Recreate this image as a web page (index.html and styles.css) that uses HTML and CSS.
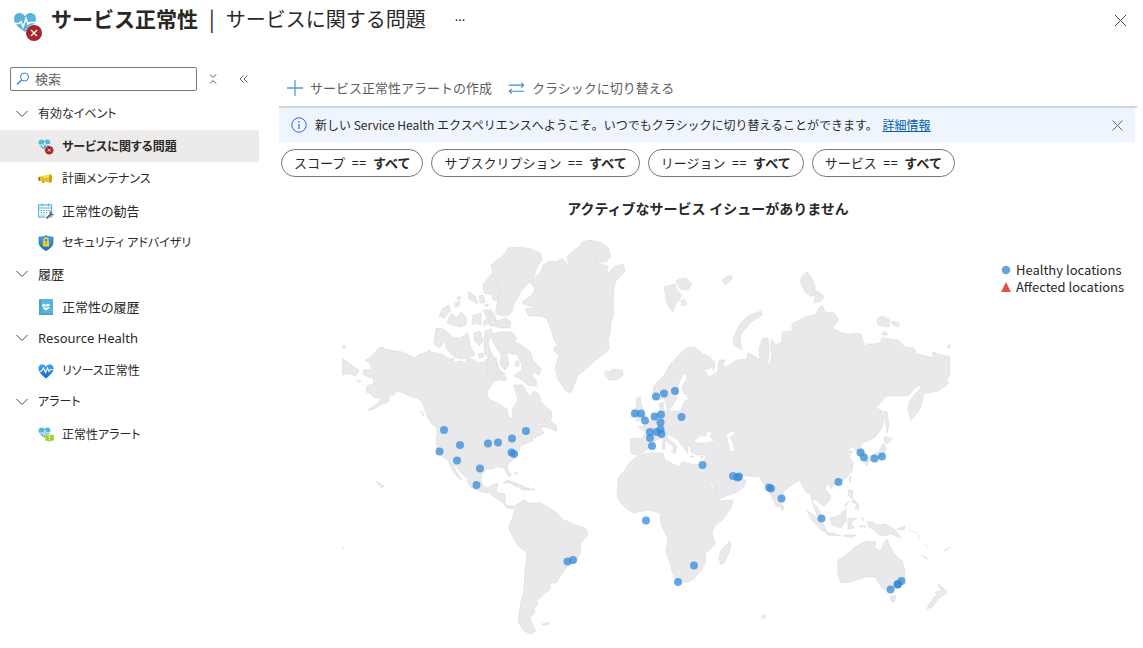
FILE: index.html
```html
<!DOCTYPE html>
<html lang="ja">
<head>
<meta charset="utf-8">
<meta name="viewport" content="width=device-width, initial-scale=1">
<title>サービス正常性 | サービスに関する問題</title>
<link rel="stylesheet" href="styles.css">
</head>
<body>
<svg class="defs" aria-hidden="true">
  <defs>
    <linearGradient id="blue" x1="0" y1="0" x2="0" y2="1"><stop offset="0" stop-color="#4ba6ee"/><stop offset="1" stop-color="#1268c4"/></linearGradient>
    <symbol id="heart" viewBox="0 0 24 22">
      <path fill="#59b4d9" d="M12 20C8 17 1 12.500 1 7C1 3 3.500 1 6.500 1C9 1 11 2.300 12 4.500C13 2.300 15 1 17.500 1C20.500 1 23 3 23 7C23 12.500 16 17 12 20Z"/>
      <path fill="none" stroke="#fff" stroke-width="1.500" d="M0 11.500H6L8 9.500L10 15L13 6.500L15 12L17 10.500H24"/>
    </symbol>
    <symbol id="heart-error" viewBox="0 0 30 30">
      <use href="#heart" x="0" y="0" width="24" height="22"/>
      <circle cx="21" cy="21" r="8.500" fill="#fff"/><circle cx="21" cy="21" r="8" fill="#a4262c"/>
      <path stroke="#fff" stroke-width="1.300" d="M18 18l6 6m0-6l-6 6"/>
    </symbol>
    <symbol id="chevron" viewBox="0 0 12 8"><path fill="none" stroke="#444" d="M0.500 1L6 6.500L11.500 1"/></symbol>
  </defs>
</svg>

<header class="page-header">
  <svg class="title-icon" aria-hidden="true"><use href="#heart-error"/></svg>
  <h1 class="title"><span class="title-main">サービス正常性</span><span class="title-bar">|</span><span class="title-sub">サービスに関する問題</span></h1>
  <button class="icon-button more" aria-label="その他">···</button>
  <button class="icon-button close" aria-label="閉じる"><svg width="13" height="13" viewBox="0 0 13 13"><path stroke="#444" d="M1 1l11 11m0-11L1 12"/></svg></button>
</header>

<div class="layout">
  <aside class="sidebar">
    <div class="search-row">
      <label class="search">
        <svg width="14" height="14" viewBox="0 0 14 14" fill="none" stroke="#2b7fd0" aria-hidden="true"><circle cx="8.500" cy="5" r="4"/><path stroke-width="1.200" d="M5.500 8L1 12.500"/></svg>
        <input type="text" placeholder="検索" aria-label="検索">
      </label>
      <button class="icon-button" aria-label="すべて折りたたむ"><svg width="8" height="10" viewBox="0 0 8 10" fill="none" stroke="#555"><path d="M1 0.500L4 3.500L7 0.500M1 9.500L4 6.500L7 9.500"/></svg></button>
      <button class="icon-button" aria-label="メニューを閉じる"><svg width="9" height="8" viewBox="0 0 9 8" fill="none" stroke="#666"><path d="M4.500 0.500L1 4L4.500 7.500M8.500 0.500L5 4L8.500 7.500"/></svg></button>
    </div>
    <nav class="nav">
      <button class="nav-group compact"><svg width="12" height="8"><use href="#chevron"/></svg>有効なイベント</button>
      <a class="nav-item compact selected" href="#issues" aria-current="page"><svg class="nav-icon"><use href="#heart-error"/></svg>サービスに関する問題</a>
      <a class="nav-item compact" href="#maintenance"><svg class="nav-icon" viewBox="0 0 16 16"><path fill="#b78b1b" d="M3.500 9H5.500L6.500 12H4.500Z"/><path fill="#e8bd16" d="M0.500 6L12 3.500V11.500L0.500 9.500Z"/><path fill="#f7df5b" d="M5 5L12 3.500V7L5 7Z"/><ellipse cx="12.500" cy="7.500" rx="1.500" ry="4.300" fill="#d19a16"/><path fill="#9b7212" d="M0.500 6H2V9.700L0.500 9.500Z"/></svg>計画メンテナンス</a>
      <a class="nav-item" href="#advisories"><svg class="nav-icon" viewBox="0 0 16 16"><rect x="0.600" y="2" width="13" height="12" fill="#fff" stroke="#59b4d9" stroke-width="1.200"/><path stroke="#59b4d9" stroke-width="1.200" d="M0.500 5H14M4 0.500V3.500M10.500 0.500V3.500"/><path stroke="#3999c6" stroke-width="1.100" stroke-dasharray="1.300 1.300" d="M2.700 7.500H12M2.700 9.800H10M2.700 12H8"/><path stroke="#fff" stroke-width="3" d="M7.500 16L12.500 11"/><path fill="none" stroke="#666" stroke-width="1.800" d="M8.500 15.500L13 11"/><path fill="none" stroke="#666" stroke-width="1.500" d="M13 8.500C11.500 9.500 12 12 15.500 11.500"/></svg>正常性の勧告</a>
      <a class="nav-item compact" href="#security"><svg class="nav-icon" viewBox="0 0 16 16"><path fill="url(#blue)" stroke="#1768b4" stroke-width="0.600" d="M8 0.500C10 2 12.500 2 15 2V7.500C15 11.500 11 14 8 15.700C5 14 1 11.500 1 7.500V2C3.500 2 6 2 8 0.500Z"/><path fill="none" stroke="#f7dc35" stroke-width="1.300" d="M6 7V5a2 2 0 0 1 4 0V7"/><rect x="4.800" y="6.500" width="6.400" height="5" rx="0.600" fill="#fcd116"/><circle cx="8" cy="8.500" r="0.800" fill="#8b8350"/></svg>セキュリティ アドバイザリ</a>
      <button class="nav-group"><svg width="12" height="8"><use href="#chevron"/></svg>履歴</button>
      <a class="nav-item" href="#history"><svg class="nav-icon" viewBox="0 0 16 16"><rect x="1" width="14" height="16" rx="0.600" fill="#59b4d9"/><path fill="#3999b9" d="M1 1.500L3 0H3.500V14H15V16H1Z" opacity="0.500"/><path fill="#fff" d="M8 11.500C5 9.500 4 8 4 6.700C4 4.500 7 4.300 8 6C9 4.300 12 4.500 12 6.700C12 8 11 9.500 8 11.500Z"/><path fill="none" stroke="#59b4d9" d="M4 8H6.500L7.500 6.500L8.500 9L9.500 7.500H12"/></svg>正常性の履歴</a>
      <button class="nav-group"><svg width="12" height="8"><use href="#chevron"/></svg>Resource Health</button>
      <a class="nav-item compact" href="#resource"><svg class="nav-icon" viewBox="0 0 16 16"><path fill="url(#blue)" d="M8 15.500C5 13 0.500 9.500 0.500 5.500C0.500 0.500 6.500 0 8 4C9.500 0 15.500 0.500 15.500 5.500C15.500 9.500 11 13 8 15.500Z"/><path fill="none" stroke="#fff" stroke-width="1.100" d="M1.500 8.500L3.500 8L5.500 5L7.500 9.500L9.500 5L11 8.500L12.500 6.500H14.500"/></svg>リソース正常性</a>
      <button class="nav-group compact"><svg width="12" height="8"><use href="#chevron"/></svg>アラート</button>
      <a class="nav-item compact" href="#alerts"><svg class="nav-icon" viewBox="0 0 16 16"><use href="#heart" width="13" height="12"/><path fill="#a4cf28" stroke="#fff" stroke-width="0.500" d="M7 7.500H16V14H12.500L10.500 16V14H7Z"/><path stroke="#fff" stroke-width="1.100" d="M11.500 8.500V11M11.500 12V13"/></svg>正常性アラート</a>
    </nav>
  </aside>

  <main class="content">
    <div class="toolbar">
      <button class="command"><svg width="16" height="16" viewBox="0 0 16 16"><path stroke="#4f9fd8" stroke-width="1.300" d="M8 0V16M0 8H16"/></svg>サービス正常性アラートの作成</button>
      <button class="command"><svg width="17" height="12" viewBox="0 0 18 12" fill="none" stroke="#3d8bd0" stroke-width="1.200"><path d="M1 3H16.500M14 0.500L16.500 3L14 5.500M17 9.500H1.500M4 7L1.500 9.500L4 12"/></svg>クラシックに切り替える</button>
    </div>
    <div class="banner" role="status">
      <svg width="16" height="16" viewBox="0 0 16 16" aria-hidden="true"><circle cx="8" cy="8" r="7.200" fill="none" stroke="#2b6fd6"/><path stroke="#2b6fd6" stroke-width="1.200" d="M8 7V12M8 4V5.400"/></svg>
      <p class="banner-text">新しい Service Health エクスペリエンスへようこそ。いつでもクラシックに切り替えることができます。 <a href="#details">詳細情報</a></p>
      <button class="icon-button banner-close" aria-label="閉じる"><svg width="11" height="11" viewBox="0 0 11 11"><path stroke="#666" d="M0.500 0.500l10 10m0-10l-10 10"/></svg></button>
    </div>
    <div class="filters">
      <button class="pill">スコープ <span class="op">==</span> <b>すべて</b></button>
      <button class="pill">サブスクリプション <span class="op">==</span> <b>すべて</b></button>
      <button class="pill">リージョン <span class="op">==</span> <b>すべて</b></button>
      <button class="pill">サービス <span class="op">==</span> <b>すべて</b></button>
    </div>
    <h2 class="headline">アクティブなサービス イシューがありません</h2>
    <div class="chart">
      <svg class="map" viewBox="342 238 608 402" role="img" aria-label="世界地図">
        <g class="land">
          <!-- North America -->
          <path d="M375 352L379 348L382 347L385 349L390 350L396 351L402 352L409 355L415 358L420 354L425 353L430 350L432 353L435 352L437 354L442 354L446 357L450 359L454 358L453 362L462 361L464 364L467 359L472 359L478 363L484 362L488 358L487 352L490 350L493 356L496 358L498 366L500 370L505 374L500 380L494 381L491 386L488 390L487 395L490 400L495 402L500 405L507 409L508 415L511 419L513 416L512 409L516 404L518 399L516 393L514 385L523 385L526 391L530 397L534 391L539 394L541 402L545 406L551 411L552 417L546 421L538 424L534 427L540 425L541 429L544 433L540 435L534 438L532 436L533 441L527 443L520 446L520 449L517 453L517 456L512 461L507 465L508 470L511 474L509 477L506 472L504 468L500 467L496 467L494 469L487 469L482 473L481 480L483 486L488 488L492 485L498 483L496 491L499 493L505 494L505 503L509 506L515 506L513 509L507 508L501 501L493 496L490 493L482 492L472 488L468 483L467 478L460 472L455 465L453 464L456 471L462 480L458 478L453 471L450 465L448 460L440 455L437 449L436 443L437 433L437 427L432 423L428 418L425 410L422 402L417 398L412 397L404 393L397 391L394 395L390 395L388 402L380 405L374 409L368 410L378 403L381 398L373 397L372 394L366 392L367 386L373 384L374 379L368 377L363 374L364 370L372 369L370 363L365 360L369 358Z"/>
          <path d="M342 358L349 363L354 367L359 370L356 376L350 374L346 374L342 375ZM342 346L346 346L344 349ZM356 380L361 381L359 382ZM421 411L424 417L423 413ZM429 418L435 422L437 427L432 424ZM376 481L384 486L382 488ZM342 547h1v2z"/>
          <path d="M436 329L437 328L443 329L450 334L452 337L460 338L468 333L470 345L475 355L468 358L461 359L455 357L449 352L446 347L445 340L442 345L439 348L434 344Z"/>
          <path d="M439 316L443 308L449 305L450 311L444 318ZM447 323L451 314L457 318L461 312L467 318L466 325L459 327ZM455 303L460 301L459 306L455 307ZM457 298l3-2 1 2-3 2zM468 291L475 296L478 304L469 299ZM479 296L483 295L485 303L480 303ZM484 305l4-1v3zM473 315L481 313L481 325L476 323L472 325ZM474 333L480 331L483 341L479 346L474 340ZM485 331L491 329L493 334L488 342L490 350L491 358L485 354L484 344ZM478 354l5 -1 1 4-5 1zM483 310L491 310L496 318L496 325L490 326L486 315ZM483 322l3-3 2 5-4 2z"/>
          <path d="M488 278L493 272L492 266L498 275L500 280L506 282L504 289L499 293L500 301L493 300L492 295L484 293L483 285Z"/>
          <path d="M491 265L497 260L504 255L508 248L520 247L531 249L540 253L542 260L537 267L534 277L527 285L521 291L518 297L514 304L512 312L507 316L500 315L495 313L497 306L498 299L500 292L499 285L495 279L493 273Z"/>
          <path d="M490 312L492 318L497 321L506 318L511 322L510 328L502 328L494 326L489 324ZM492 334L500 332L512 332L517 338L514 342L522 345L531 353L533 360L541 369L539 375L534 372L532 375L537 382L536 386L528 385L521 379L514 376L519 372L522 370L522 364L517 355L508 353L500 353L496 347L493 342ZM501 354L507 354L509 365L505 370L500 365ZM490 355L496 363L498 372L493 381L488 379L486 365ZM500 372L507 378L505 381L501 380ZM516 361l3 0 0 5-4 0z"/>
          <!-- Greenland and Iceland -->
          <path d="M522 302L532 295L535 289L530 282L541 272L543 265L550 261L557 262L562 258L569 266L567 257L572 252L580 246L582 242L590 240L602 243L608 248L611 256L606 262L594 262L608 266L607 275L615 266L623 264L625 271L616 281L614 286L613 307L614 313L611 322L610 334L608 339L609 349L606 352L597 359L590 365L582 372L578 375L573 388L571 393L565 390L558 379L555 368L559 355L554 351L554 347L558 346L554 340L551 329L547 319L541 316L529 316L525 309L535 308L523 304ZM605 371L609 372L613 369L622 370L623 375L617 380L609 380L605 375Z"/>
          <path d="M540 427L546 418L550 413L551 422L556 425L557 431L551 429L547 427ZM503 483L508 480L520 485L525 487L517 487L510 483ZM520 488L531 488L530 490L522 490ZM532 489h3v1h-3zM514 473l3 2-1-3z"/>
          <!-- South America -->
          <path d="M516 505L524 500L528 503L540 503L548 507L557 513L562 519L575 525L585 528L588 534L581 543L580 553L576 562L568 565L562 574L556 583L550 583L550 590L544 593L541 597L536 600L538 604L534 608L535 612L530 618L532 624L536 631L530 634L523 630L518 621L520 608L521 602L524 590L525 570L527 555L525 551L518 546L510 531L509 526L512 519L515 510ZM542 624l7-2-1 3-5 0z"/>
          <!-- Africa -->
          <path d="M638 456L648 453L663 453L665 460L671 463L679 467L682 462L691 464L702 465L707 477L711 486L716 492L720 501L733 500L731 508L724 518L714 527L712 533L715 544L706 553L705 564L700 571L694 579L687 582L678 582L673 574L670 563L666 551L668 539L663 529L660 520L661 515L657 512L647 510L634 513L627 509L620 502L617 496L618 485L618 478L625 470L630 462ZM721 550L726 545L730 541L731 547L725 562L721 565L719 558Z"/>
          <!-- Europe and Asia -->
          <path d="M655 398L653 388L657 382L664 376L670 365L678 356L684 350L688 347L694 347L698 350L703 354L710 357L715 363L714 369L706 368L704 371L708 376L714 374L718 372L719 360L725 360L722 367L728 366L737 360L747 359L748 353L756 357L760 360L759 349L763 338L768 338L769 354L767 367L771 361L772 353L770 347L772 339L775 345L782 342L782 332L792 331L792 324L799 320L805 317L815 315L818 310L822 305L825 312L834 313L839 320L832 328L840 332L847 334L853 334L855 333L861 334L863 341L865 347L868 344L874 344L880 343L882 338L898 340L905 347L914 348L916 354L922 355L933 358L933 352L942 355L950 357L950 376L947 377L948 384L938 391L928 393L924 393L922 403L918 412L911 420L908 410L909 402L915 394L921 388L920 385L914 389L909 395L902 396L886 396L876 408L882 411L884 420L882 428L875 437L867 441L862 443L860 447L866 453L866 460L860 458L858 450L855 450L854 446L845 451L853 451L849 456L853 463L852 471L846 478L838 483L831 486L827 484L825 489L831 496L830 500L824 506L817 501L813 498L813 503L817 507L820 512L823 520L817 515L814 507L812 499L810 493L806 492L802 485L800 480L790 486L783 492L783 499L779 507L776 506L770 493L769 486L763 483L760 477L750 476L739 476L733 473L728 468L730 473L735 480L740 479L746 480L744 487L735 493L726 496L719 499L714 487L708 478L705 470L704 463L706 454L697 455L691 452L691 447L687 445L688 453L684 448L678 440L673 437L668 434L667 438L674 443L677 447L674 452L673 446L666 441L662 438L656 440L650 447L643 453L637 455L631 453L630 439L643 438L645 432L638 427L643 426L649 421L657 414L661 411L659 404L663 402L664 411L672 411L681 411L684 402L690 398L686 396L693 394L684 394L682 387L687 378L686 373L682 376L678 385L677 397L673 405L668 411L666 403L664 398L658 400Z"/>
          <path d="M636 399L640 397L641 403L643 409L646 417L642 420L635 421L639 416L637 409ZM632 410L637 408L637 416L631 417ZM663 440h2v9h-3zM671 451l5-1-1 4zM690 456h4v1h-4zM700 457l4-1-2 2z"/>
          <!-- Arctic islands -->
          <path d="M664 287L675 284L677 290L682 296L676 304L673 312L667 304ZM676 281L680 279L686 278L692 284L688 290L680 289ZM681 301l3-2 3 5-5 2zM722 280L725 278L731 275L732 279L725 285ZM761 311L762 315L751 322L741 334L740 341L742 350L734 345L733 340L739 325L748 316ZM800 281L803 275L807 272L812 278L815 287L815 295L811 296L805 292ZM816 291L819 292L824 297L821 301L814 303ZM877 319L882 316L890 320L889 327L878 325ZM892 321L900 323L898 327L892 324ZM882 333l3-2 3 4-6 0zM947 347l3-3v5z"/>
          <!-- East Asia and Pacific -->
          <path d="M884 411L887 412L889 425L887 433L886 425ZM885 436L892 439L887 444L884 441ZM884 443L886 449L883 456L874 459L867 462L870 456L878 452ZM865 460l3 1-1 5-2-3zM849 478l2-2-1 7zM830 485l3 0-2 4zM781 504l3 3-1 3-2-1zM807 511L814 515L823 524L827 531L822 531L812 520ZM825 532L833 533L841 536L828 535ZM844 535l12 0-4 2-7 0zM830 518L838 516L846 509L846 521L841 528L832 525ZM848 519L857 518L851 522L854 528L848 529ZM849 489L853 491L852 499L848 495ZM844 506l5-5-3 5zM853 499l5 5 1 6-4-2 2-4-5-2zM862 517l2 4-2-2zM860 526h6v1h-6zM867 522L873 522L876 525L885 524L894 529L901 538L891 534L885 536L878 534L874 530L869 527ZM897 529L905 526L904 530ZM908 529l9 4M917 534l3 4M925 544l3 5M922 555l6 4-3-1zM944 551l6-4-3 3z"/>
          <path d="M838 560L846 555L855 547L862 543L868 541L876 542L874 548L881 551L884 543L887 539L890 547L896 556L902 561L905 570L904 580L899 588L888 590L882 588L875 577L865 577L850 582L841 583L838 573ZM890 596L896 596L894 602L891 601ZM938 583L944 589L947 592L940 598L935 592L941 591ZM936 595L939 598L932 607L927 609L929 604ZM762 615h3v3h-3z"/>
        </g>
        <g class="water">
          <path d="M694 441L700 436L706 436L705 433L712 431L710 437L715 441L705 443L698 443ZM726 435L732 431L735 433L730 438L733 443L735 451L730 452L729 446ZM706 370L712 367L715 374L708 377Z"/>
        </g>
        <g class="dots">
          <circle cx="444" cy="430" r="4"/><circle cx="460" cy="445" r="4"/><circle cx="439.500" cy="451.500" r="4"/><circle cx="457" cy="460.500" r="4"/><circle cx="480" cy="468.500" r="4"/><circle cx="476.500" cy="485" r="4"/><circle cx="488" cy="443.500" r="4"/><circle cx="498" cy="442.500" r="4"/><circle cx="512" cy="438.500" r="4"/><circle cx="526" cy="431" r="4"/><circle cx="511.500" cy="452.500" r="4"/><circle cx="514" cy="454" r="4"/><circle cx="567.500" cy="561.500" r="4"/><circle cx="573" cy="560" r="4"/>
          <circle cx="656" cy="396.500" r="4"/><circle cx="664" cy="393.500" r="4"/><circle cx="675" cy="391" r="4"/><circle cx="635" cy="413.500" r="4"/><circle cx="641" cy="413.500" r="4"/><circle cx="645" cy="420.500" r="4"/><circle cx="654.500" cy="416.500" r="4"/><circle cx="661" cy="414.500" r="4"/><circle cx="660.500" cy="422.500" r="4"/><circle cx="681.500" cy="417" r="4"/><circle cx="650" cy="432" r="4"/><circle cx="656.500" cy="432" r="4"/><circle cx="660.500" cy="429.500" r="4"/><circle cx="661.500" cy="434" r="4"/><circle cx="650" cy="438" r="4"/><circle cx="652" cy="446" r="4"/>
          <circle cx="702.500" cy="465" r="4"/><circle cx="733" cy="476" r="4"/><circle cx="737.500" cy="477.500" r="4"/><circle cx="739" cy="476.500" r="4"/><circle cx="769" cy="487.500" r="4"/><circle cx="771" cy="488.500" r="4"/><circle cx="646" cy="520.500" r="4"/><circle cx="694" cy="565.500" r="4"/><circle cx="678" cy="582" r="4"/>
          <circle cx="781.500" cy="498.500" r="4"/><circle cx="821.500" cy="518.500" r="4"/><circle cx="838.500" cy="482" r="4"/><circle cx="860.500" cy="452.500" r="4"/><circle cx="864" cy="457.500" r="4"/><circle cx="874.500" cy="458.500" r="4"/><circle cx="882" cy="456.500" r="4"/><circle cx="890.500" cy="589.500" r="4"/><circle cx="897.500" cy="584.500" r="4"/><circle cx="898" cy="584" r="4"/><circle cx="901.500" cy="581" r="4"/>
        </g>
      </svg>
      <ul class="legend">
        <li><svg width="10" height="10" viewBox="0 0 10 10"><circle cx="5" cy="5" r="4.300" fill="#64a6de"/></svg>Healthy locations</li>
        <li><svg width="10" height="10" viewBox="0 0 10 10"><path fill="#e2533f" d="M5 0L10 10H0Z"/></svg>Affected locations</li>
      </ul>
    </div>
  </main>
</div>
</body>
</html>
```

FILE: styles.css
```css
* { box-sizing: border-box; }
body {
  margin: 0;
  background: #fff;
  color: #292827;
  font: 13px/20px "Noto Sans", "Noto Sans CJK JP", sans-serif;
}
button, input { font: inherit; color: inherit; }
button { margin: 0; padding: 0; border: 0; background: none; cursor: pointer; }
svg { flex: none; display: block; }
.defs { position: absolute; width: 0; height: 0; }

.page-header {
  display: flex;
  align-items: center;
  height: 40px;
  padding: 0 12px;
}
.title-icon { width: 30px; height: 30px; margin: 14px 8px 0 1px; }
.title {
  display: flex;
  align-items: baseline;
  margin: 0;
  padding-bottom: 4px;
  font-family: "Noto Sans CJK JP", sans-serif;
  font-size: 21px;
  line-height: 36px;
  font-weight: 400;
  white-space: nowrap;
}
.title-main { font-weight: 700; }
.title-bar { padding: 0 11px; }
.title-sub { font-size: 20px; }
.icon-button { display: grid; place-items: center; flex: none; }
.more { margin-left: 29px; }
.close { margin-left: auto; margin-right: 4px; }

.layout { display: flex; padding-top: 27px; }
.sidebar { flex: 0 0 259px; }
.search-row { display: flex; align-items: center; gap: 18px; height: 24px; padding-left: 10px; }
.search-row .icon-button { width: 12px; }
.search {
  display: flex;
  align-items: center;
  gap: 5px;
  width: 187px;
  height: 24px;
  margin-right: -8px;
  padding-left: 5px;
  border: 1px solid #777;
  border-radius: 2px;
}
.search input { min-width: 0; flex: 1; height: 20px; padding: 0; border: 0; outline: 0; background: none; }
.search input::placeholder { color: #605e5c; opacity: 1; }
.nav { padding-top: 7px; font-feature-settings: "palt"; }
.nav-group, .nav-item {
  display: flex;
  align-items: center;
  width: 100%;
  height: 32px;
  color: #292827;
  text-align: left;
  text-decoration: none;
  white-space: nowrap;
}
.nav-group { gap: 10px; padding-left: 16px; }
.nav-item { gap: 8px; padding: 2px 0 0 38px; }
.nav-icon { width: 16px; height: 16px; }
.compact { font-size: 12px; }
.selected { background: #edebe9; font-weight: 700; }

.content { flex: 1; min-width: 0; padding-left: 20px; }
.toolbar {
  display: flex;
  gap: 16px;
  height: 41px;
  margin-right: 6px;
  padding-left: 8px;
  border-bottom: 2px solid #d2d4d6;
}
.command { display: flex; align-items: center; gap: 7px; height: 42px; color: #605e5c; white-space: nowrap; }
.banner {
  display: flex;
  align-items: center;
  gap: 8px;
  height: 34px;
  margin-right: 8px;
  padding: 0 12px;
  background: #eff5fe;
  font-family: "Noto Sans CJK JP", sans-serif;
  font-size: 12px;
}
.banner-text { margin: 0; white-space: nowrap; }
.banner-text a { margin-left: 2px; color: #0060a8; text-decoration: underline; }
.banner-close { margin-left: auto; }
.filters { display: flex; gap: 8px; padding: 7px 2px 0; }
.pill {
  height: 28px;
  padding: 0 12px;
  border: 1px solid #7a7876;
  border-radius: 14px;
  line-height: 26px;
  white-space: nowrap;
}
.pill b { font-weight: 700; }
.op { margin: 0 3px; }
.headline { margin: 22px 6px 0 0; font-size: 14px; line-height: 20px; font-weight: 700; text-align: center; }
.chart { display: flex; align-items: flex-start; gap: 51px; padding: 19px 0 0 63px; }
.map { flex: 1; min-width: 0; height: auto; }
.land { fill: #e9e9eb; stroke: #dededf; stroke-width: 0.7; stroke-linejoin: round; }
.water { fill: #fff; stroke: #dededf; stroke-width: 0.5; }
.dots { fill: #3489d8; fill-opacity: 0.75; }
.legend {
  flex: 0 0 142px;
  margin: 0;
  padding: 23px 0 0;
  list-style: none;
  font-family: "Noto Sans CJK JP", sans-serif;
  line-height: 17px;
  white-space: nowrap;
}
.legend li { display: flex; align-items: center; gap: 5px; }
```
